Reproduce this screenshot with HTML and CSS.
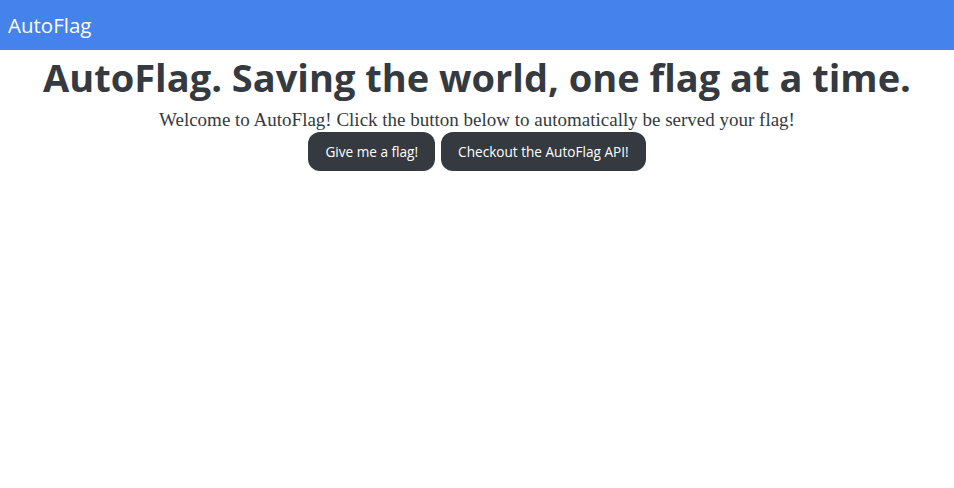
FILE: index.html
```html
<!DOCTYPE html>
<html>
<head>
<meta charset="utf-8">
<link rel="stylesheet" href="styles.css">
</head>
<body>
<nav class="navbar"><span class="brand">AutoFlag</span></nav>
<main class="content">
  <h1 class="title">AutoFlag. Saving the world, one flag at a time.</h1>
  <p class="lead">Welcome to AutoFlag! Click the button below to automatically be served your flag!</p>
  <div class="actions">
    <button class="btn btn-first">Give me a flag!</button>
    <button class="btn btn-second">Checkout the AutoFlag API!</button>
  </div>
</main>
</body>
</html>
```
FILE: styles.css
```css
html, body {
  margin: 0;
  padding: 0;
  background: #fff;
}
.navbar {
  height: 50px;
  background: #4582ec;
  display: flex;
  align-items: center;
  padding: 0 8px;
}
.brand {
  color: #fff;
  font-family: "Open Sans", sans-serif;
  font-size: 20.5px;
}
.content {
  display: flex;
  flex-direction: column;
  align-items: center;
}
.title {
  margin: 3px 0 0;
  font-family: "Open Sans", sans-serif;
  font-weight: 700;
  font-size: 38px;
  line-height: 48px;
  color: #343a40;
}
.lead {
  margin: 6px 0 0;
  font-family: "Liberation Serif", serif;
  font-size: 19px;
  line-height: 25px;
  color: #343a40;
}
.actions {
  display: flex;
  gap: 6px;
  margin-top: 0;
}
.btn {
  height: 39px;
  padding: 0 17px;
  border: none;
  border-radius: 12px;
  background: #343a40;
  color: #fff;
  font-family: "Open Sans", sans-serif;
  font-size: 13.6px;
}
```
